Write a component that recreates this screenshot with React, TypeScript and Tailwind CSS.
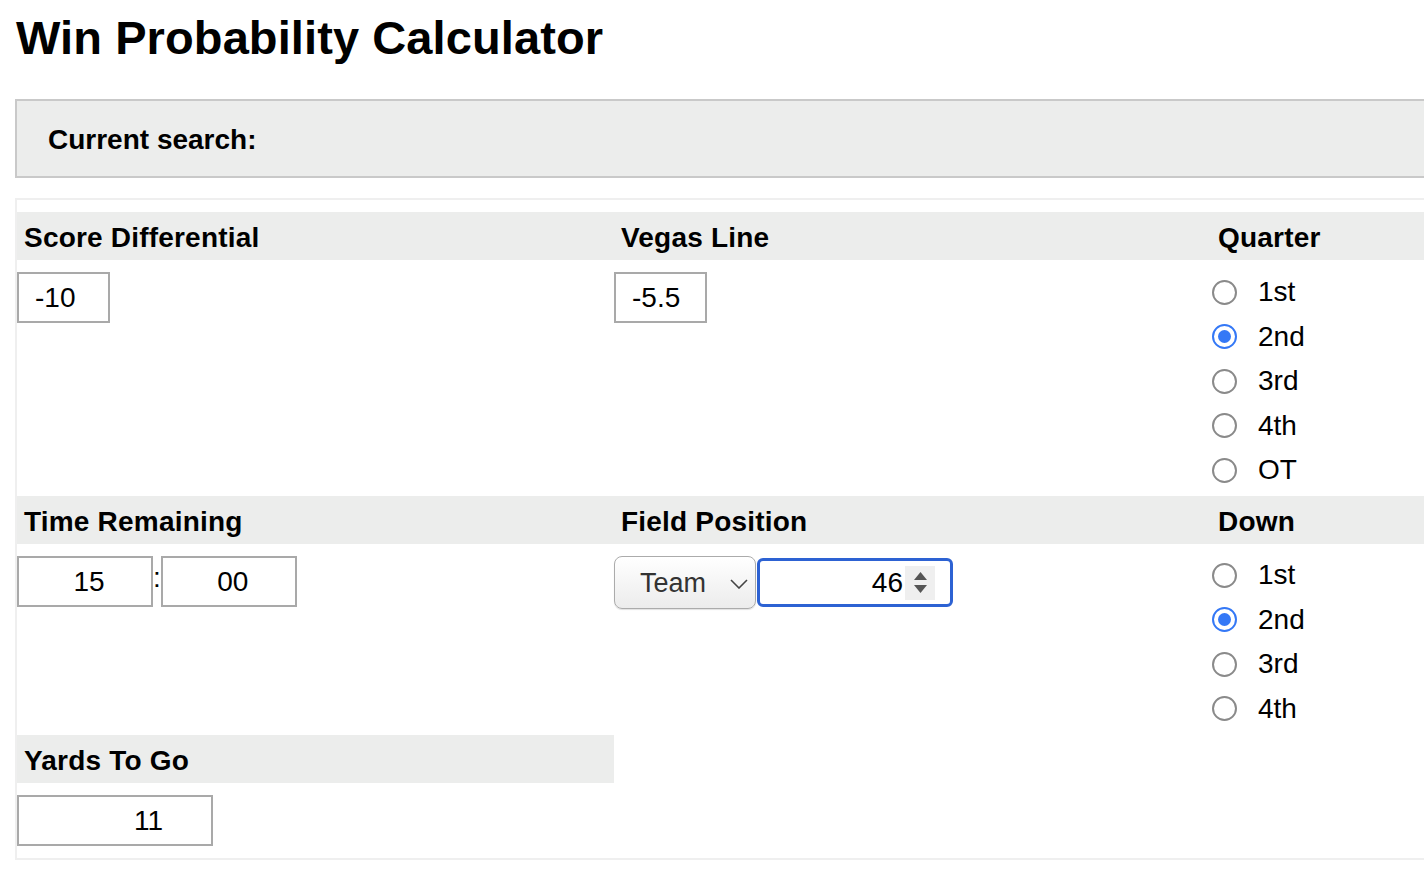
import React from "react";

const font = { fontFamily: '"Liberation Sans", Arial, Helvetica, sans-serif' };

const Radio = ({ label, checked }: { label: string; checked?: boolean }) => (
  <div className="flex h-[44.5px] items-center">
    {checked ? (
      <span className="ml-[1px] flex h-[25px] w-[25px] items-center justify-center rounded-full border-[2.5px] border-[#3478f6] bg-white">
        <span className="h-[13px] w-[13px] rounded-full bg-[#3478f6]" />
      </span>
    ) : (
      <span className="ml-[1px] h-[25px] w-[25px] rounded-full border-[2px] border-[#8a8a8a] bg-white" />
    )}
    <span className="ml-[21px] text-[28px] leading-none text-black">{label}</span>
  </div>
);

const HeaderCell = ({ children }: { children?: React.ReactNode }) => (
  <div className="flex h-[48px] items-center bg-[#ecedec] pl-[7px] pt-[3px] text-[28px] font-bold tracking-[0.2px] text-black">
    {children}
  </div>
);

const TextBox = ({ value, className }: { value: string; className: string }) => (
  <input
    readOnly
    value={value}
    style={font}
    className={`h-[51px] border-2 border-[#a9a9a9] bg-white text-[28px] text-black outline-none ${className}`}
  />
);

export default function App() {
  return (
    <div style={font} className="h-[878px] w-[1424px] overflow-hidden bg-white text-black">
      <h1 className="pl-[16px] pt-[14px] text-[47px] font-bold leading-[47px] tracking-[0.1px]">
        Win Probability Calculator
      </h1>

      <div className="ml-[15px] mt-[38px] flex h-[79px] w-[1440px] items-center border-2 border-[#c9c9c9] bg-[#ecedec] pl-[31px] pt-[2px]">
        <span className="text-[28px] font-bold">Current search:</span>
      </div>

      <div className="ml-[15px] mt-[20px] w-[1840px] border-2 border-[#efefef] pt-[12px]">
        <div className="grid grid-cols-[597px_597px_597px]">
          <HeaderCell>Score Differential</HeaderCell>
          <HeaderCell>Vegas Line</HeaderCell>
          <HeaderCell>Quarter</HeaderCell>

          <div className="h-[236px] pt-[12px]">
            <TextBox value="-10" className="w-[93px] pl-[16px]" />
          </div>
          <div className="h-[236px] pt-[12px]">
            <TextBox value="-5.5" className="w-[93px] pl-[16px]" />
          </div>
          <div className="h-[236px] pt-[10px]">
            <Radio label="1st" />
            <Radio label="2nd" checked />
            <Radio label="3rd" />
            <Radio label="4th" />
            <Radio label="OT" />
          </div>

          <HeaderCell>Time Remaining</HeaderCell>
          <HeaderCell>Field Position</HeaderCell>
          <HeaderCell>Down</HeaderCell>

          <div className="flex h-[191px] items-start pt-[12px]">
            <TextBox value="15" className="w-[136px] pl-[8px] text-center" />
            <span className="text-[28px] leading-[44px]">:</span>
            <TextBox value="00" className="w-[136px] pl-[8px] text-center" />
          </div>
          <div className="flex h-[191px] items-start pt-[12px]">
            <div className="flex h-[53px] w-[142px] items-center rounded-[8px] border-[1.5px] border-[#ababab] bg-gradient-to-b from-white to-[#ececec] pl-[25px] pt-[2px] shadow-[0_1px_1px_rgba(0,0,0,0.12)]">
              <span className="text-[27px] text-[#333]">Team</span>
              <svg className="ml-[24px]" width="18" height="10" viewBox="0 0 18 10">
                <polyline points="1,1 9,9 17,1" fill="none" stroke="#444" strokeWidth="1.6" />
              </svg>
            </div>
            <div className="ml-[1px] mt-[2px] flex h-[49px] w-[196px] items-center justify-end rounded-[6px] border-[3px] border-[#2d62d3] bg-white pr-[15px]">
              <span className="text-[28px]">46</span>
              <span className="ml-[2px] flex h-[34px] w-[30px] flex-col items-center justify-center gap-[5px] bg-[#efefef]">
                <svg width="13" height="8" viewBox="0 0 13 8">
                  <polygon points="6.5,0 13,8 0,8" fill="#555" />
                </svg>
                <svg width="13" height="8" viewBox="0 0 13 8">
                  <polygon points="0,0 13,0 6.5,8" fill="#555" />
                </svg>
              </span>
            </div>
          </div>
          <div className="h-[191px] pt-[9px]">
            <Radio label="1st" />
            <Radio label="2nd" checked />
            <Radio label="3rd" />
            <Radio label="4th" />
          </div>

          <HeaderCell>Yards To Go</HeaderCell>
          <div />
          <div />

          <div className="pb-[12px] pt-[12px]">
            <TextBox value="11" className="h-[49px] w-[196px] pr-[48px] text-right" />
          </div>
          <div />
          <div />
        </div>
      </div>
    </div>
  );
}
